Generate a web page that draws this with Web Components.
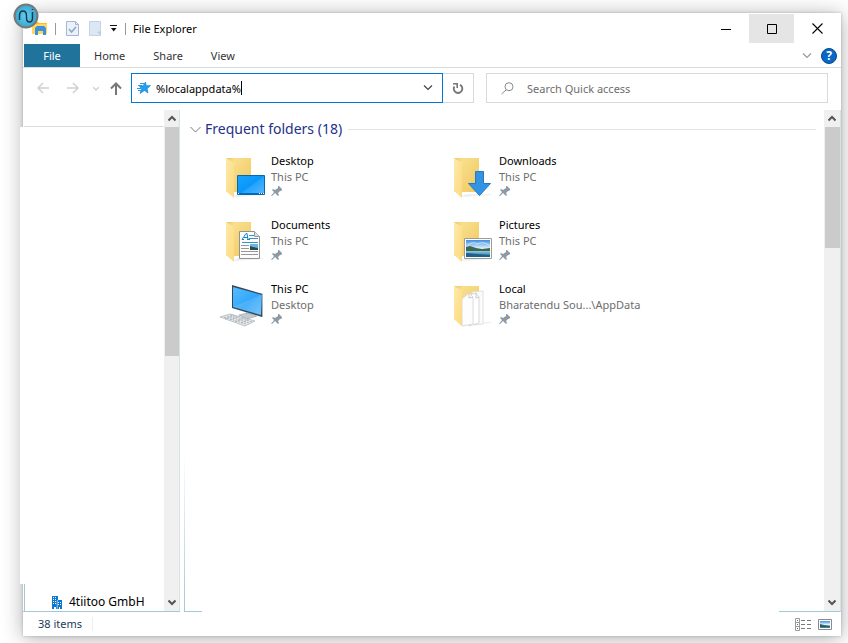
<!DOCTYPE html>
<html lang="en">
<head>
<meta charset="utf-8">
<title>File Explorer</title>
<style>
html,body{margin:0;height:100%;background:#fff}
body{box-sizing:border-box;padding:13px 7px 7px 23px;font:11px/16px "Noto Sans","Open Sans",sans-serif;color:#000;overflow:hidden}
</style>
</head>
<body>
<explorer-window></explorer-window>
<script>
const define = (name, html, setup) => {
  const t = document.createElement('template');
  t.innerHTML = `<style>*{box-sizing:border-box}button{font:inherit;color:inherit;background:none;border:0;padding:0;margin:0;display:flex;align-items:center;justify-content:center}svg{display:block;flex:none}</style>` + html;
  customElements.define(name, class extends HTMLElement {
    constructor() {
      super();
      this.attachShadow({mode: 'open'}).append(t.content.cloneNode(true));
    }
    connectedCallback() { if (setup) setup(this, this.shadowRoot); }
  });
};

const folder = `<defs><linearGradient id="f" x1="0" y1="0" x2="1" y2="1"><stop offset="0" stop-color="#e9c869"/><stop offset=".2" stop-color="#f9de8c"/><stop offset="1" stop-color="#efc85f"/></linearGradient><linearGradient id="g" x1="0" x2="1" y2="1"><stop offset="0" stop-color="#ffeaa9"/><stop offset="1" stop-color="#fbd97f"/></linearGradient><linearGradient id="b" x2="1" y2="1"><stop offset="0" stop-color="#1aa3fb"/><stop offset=".5" stop-color="#0897fb"/><stop offset="1" stop-color="#45b2ff"/></linearGradient></defs>
<path d="M12 41l6-3h24l2 1-26 2z" fill="#000" opacity=".06"/><path d="M6 2h25v34H6z" fill="url(#f)"/><path d="M6 2l8 5v35l-8-7z" fill="url(#g)"/>`;
const plain = `<svg width="50" height="46" viewBox="0 0 50 46">`;
const photo = `<defs><linearGradient id="s" x2="0" y2="1"><stop offset="0" stop-color="#3f8fe0"/><stop offset=".5" stop-color="#e4f2fb"/><stop offset=".7" stop-color="#83bad2"/><stop offset="1" stop-color="#246c9c"/></linearGradient></defs>`;
const art = {
  desktop: `${plain}${folder}<path d="M17.500 19.500h27v19h-27z" fill="url(#b)" stroke="#0868ad"/><path d="M21 37L44 20v17z" fill="#fff" opacity=".1"/><path d="M18 37.500h26" stroke="#066ab5"/><path d="M18 37.500h1m20 0h1m1 0h1m1 0h1" stroke="#fff"/></svg>`,
  documents: `${plain}${folder}<path d="M19.500 11.500h15l5 5v22h-20z" fill="#fcfcfc" stroke="#929292"/><path d="M34.500 11.500v5h5" fill="#ddd" stroke="#999"/><path d="M22 19.500l4-6h1l1 6m-4-2h4m-6 2h2m3 0h3" fill="none" stroke="#1684c6"/><path d="M29 15.500h5m-5 3h9M22 22.500h16" stroke="#3093ce"/><path d="M21 25.500h8m-8 3h8m-8 3h17m-17 3h17" stroke="#989898"/><path d="M30 24h8v6h-8z" fill="#6cb3e5"/><path d="M30 26l3 1 5 1v2h-8z" fill="#294c4b"/></svg>`,
  pc: `${plain}<defs><linearGradient id="p" x2="1" y2="1"><stop stop-color="#55bcff"/><stop offset=".55" stop-color="#32a6fa"/><stop offset="1" stop-color="#63bdfa"/></linearGradient></defs><path d="M12 1l31 9-1 23-30-9z" fill="#35485a"/><path d="M13 3l29 8-1 20-28-8z" fill="url(#p)"/><path d="M13 23l28-12v20z" fill="#fff" opacity=".12"/><path d="M42 10h1v23h-1z" fill="#aab6bd"/><path d="M26 28l6 2-1 3h-4z" fill="#8998a3"/><path d="M19 31l9-2 9 3-10 3z" fill="#c3cbd0" stroke="#8f9ca5" stroke-width=".6"/><path d="M0 33l10-3 25 7-10 5z" fill="#e6e9eb" stroke="#a5afb5" stroke-width=".7"/><path d="M4 33l22 7M7 32l22 7M10 31l22 7M5 35l9-4m-4 5l9-4m-4 6l9-4m-3 5l8-4" stroke="#a0a9af" stroke-dasharray="2 1" stroke-width=".8"/></svg>`,
  downloads: `${plain}${folder}<path d="M27.500 15.500h8v12h7L31.500 39.500l-11-12h7z" fill="#3394e5" stroke="#237ac2"/></svg>`,
  pictures: `${plain}${folder}${photo}<path d="M16.500 18.500h27v20h-27z" fill="#fff" stroke="#9b9b9b"/><path d="M18 20h24v17H18z" fill="url(#s)"/><path d="M18 27l4-1 6 2 6 1 8-1v3H18z" fill="#386951"/><path d="M18 33l24 2v2H18z" fill="#1b638f"/><path d="M20 25q5-4 9-1 6-3 12 1" fill="none" stroke="#fff" opacity=".6"/></svg>`,
  local: `${plain}${folder}<path d="M24 8l11-1v33l-9 1z" fill="#fbfbfb" stroke="#e0e0e0"/><path d="M21 11l7-2 3 4v26l-10 3z" fill="#fff" stroke="#d9d9d9"/><path d="M14 15l7-6 4 4v27l-11 2z" fill="#fdfdfd" stroke="#dcdcdc"/><path d="M21 9v5l4-1M28 9v5l3-1" fill="none" stroke="#cacaca"/><path d="M6 2l8 5v35l-8-7z" fill="url(#g)"/></svg>`,
  pin: `<svg width="12" height="12" viewBox="0 0 12 12"><path d="M7 1h1l3 3v1l-1 1H9L7 8l1 2-1 1-3-3-3 3H0l3-4-2-2 1-1 2 1 3-2z" fill="#8d9aa5"/></svg>`,
  quick: `<svg width="16" height="16" viewBox="0 0 16 16"><path d="M0 1h6l1 1h8v11H0z" fill="#f6bd2f"/><path d="M0 3h15v10H0z" fill="#ffd75e"/><path d="M3 7l2-2h7l2 2v7h-3v-4H6v4H3z" fill="#3d91dc"/></svg>`,
  logo: `<svg width="26" height="26" viewBox="0 0 26 26"><defs><radialGradient id="l"><stop stop-color="#65cef0"/><stop offset="1" stop-color="#36a7d0"/></radialGradient></defs><circle cx="13" cy="13" r="11.500" fill="url(#l)" stroke="#777" stroke-width="2"/><path d="M5.500 17v-4q0-5 3.500-5t3.500 5v2q0 4 3 4t3-4V9m0-3v1" transform="translate(1 0)" fill="none" stroke="#173a4b" stroke-width="1.500"/></svg>`,
  check: `<svg width="13" height="17" viewBox="0 0 13 17"><path d="M.5 1.500h9l3 3v11H.5z" fill="#eaf1f9" stroke="#a5b8d0"/><path d="M9.500 1.500v3h3" fill="none" stroke="#a5b8d0"/><path d="M3 9l2.500 3L10 7" fill="none" stroke="#8daaca" stroke-width="1.600"/></svg>`,
  page: `<svg width="13" height="17" viewBox="0 0 13 17"><path d="M.5 1.500h11v14H.5z" fill="#dce7f5" stroke="#c4d2e5"/><path d="M8 12l4-1v4l-2-1z" fill="#bacde3"/></svg>`,
  more: `<svg width="8" height="8" viewBox="0 0 8 8"><path d="M0 .5h7" stroke="#111"/><path d="M1 3h5.500L3.700 6.500z" fill="#111"/></svg>`,
  down: `<svg width="10" height="6" viewBox="0 0 10 6"><path d="M1 .5l4 4 4-4" fill="none" stroke="currentColor" stroke-width="1.200"/></svg>`,
  small: `<svg width="6" height="5" viewBox="0 0 6 5"><path d="M0 1l3 3 3-3" fill="none" stroke="currentColor" stroke-width="1.300"/></svg>`,
  section: `<svg width="11" height="7" viewBox="0 0 11 7"><path d="M.5 1l5 5 5-5" fill="none" stroke="#777"/></svg>`,
  back: `<svg width="13" height="12" viewBox="0 0 13 12"><path d="M6 1L1 6l5 5M1 6h11" fill="none" stroke="currentColor" stroke-width="1.500"/></svg>`,
  fwd: `<svg width="13" height="12" viewBox="0 0 13 12"><path d="M7 1l5 5-5 5M12 6H1" fill="none" stroke="currentColor" stroke-width="1.500"/></svg>`,
  up: `<svg width="12" height="13" viewBox="0 0 12 13"><path d="M1 6.500l5-5 5 5M6 2v11" fill="none" stroke="currentColor" stroke-width="2"/></svg>`,
  star: `<svg width="14" height="14" viewBox="0 0 14 14"><path d="M8.500 1l.8 3.800 4.200-.3-3.300 3.300L11 12 7.500 9.500 3 12.500l1.500-4.700-2-2.800 3.500-.2z" fill="#1fa1f3" stroke="#147cc4" stroke-width=".6"/><path d="M3 2.500h4M1 4.500h4M0 7.500h4M1 9.500h3" stroke="#2b9ae0"/></svg>`,
  refresh: `<svg width="12" height="13" viewBox="0 0 12 13"><path d="M8 2.800A4.300 4.300 0 1 1 2.300 4.500" fill="none" stroke="#777" stroke-width="1.900"/><path d="M1 1.800h4.200v4.200" fill="none" stroke="#777" stroke-width="1.600"/></svg>`,
  search: `<svg width="13" height="13" viewBox="0 0 13 13"><circle cx="8" cy="4.700" r="4" fill="none" stroke="#888"/><path d="M5 8l-4.500 4" stroke="#888"/></svg>`,
  min: `<svg width="10" height="10"><path d="M0 5.500h10" stroke="#000"/></svg>`,
  max: `<svg width="10" height="10"><path d="M.5.500h9v9h-9z" fill="none" stroke="#000"/></svg>`,
  close: `<svg width="11" height="11"><path d="M.5.500l10 10m0-10l-10 10" stroke="#000" stroke-width="1.100"/></svg>`,
  sup: `<svg width="8" height="7" viewBox="0 0 8 7"><path d="M.5 5.500L4 2l3.500 3.500" fill="none" stroke="#555" stroke-width="2"/></svg>`,
  sdown: `<svg width="8" height="7" viewBox="0 0 8 7"><path d="M.5 1.500L4 5l3.500-3.500" fill="none" stroke="#555" stroke-width="2"/></svg>`,
  building: `<svg width="10" height="13" viewBox="0 0 10 13"><path d="M0 0h6v4h4v9H8v-2H7v2H4v-2H2v2H0z" fill="#0b78d0"/><path d="M1 1.500h1m1 0h1m-3 2h1m1 0h1m-3 2h1m1 0h1m-3 2h1m1 0h1M6 6.500h1m1 0h1m-3 2h1m1 0h1" stroke="#fff"/><path d="M5 4.500h1M5.200 5v8" stroke="#fff" stroke-width=".6"/></svg>`,
  details: `<svg width="16" height="13" viewBox="0 0 16 13"><path d="M.5.500h4v12h-4zM0 4.500h5M0 8.500h5" fill="#fff" stroke="#999"/><path d="M2 2.500h1" stroke="#393"/><path d="M2 6.500h1" stroke="#36c"/><path d="M2 10.500h1" stroke="#c33"/><path d="M6 2.500h4m2 0h4M6 6.500h4m2 0h4M6 10.500h4m2 0h4" stroke="#777"/></svg>`,
  large: `<svg width="14" height="11" viewBox="0 0 14 11">${photo}<path d="M.5.500h13v10H.5z" fill="#fff" stroke="#8a8a8a"/><path d="M2 2h10v7H2z" fill="url(#s)"/><path d="M2 5l4 1 6 1v1H2z" fill="#315e61"/></svg>`
};

define('ui-icon', `<style>:host{display:block;flex:none}</style><span></span>`, (el, root) => {
  root.querySelector('span').innerHTML = art[el.getAttribute('name')];
});

define('app-logo', `<style>:host{display:block;position:absolute;left:-10px;top:-10px;z-index:2}</style><ui-icon name="logo"></ui-icon>`);

define('title-bar', `<style>
:host{display:flex;height:31px;align-items:center;padding-left:9px}
.group{display:flex;align-items:center}
i{width:1px;height:12px;background:#999}
.quick{gap:10px;flex:1}
.tools{gap:12px}
.tools ui-icon{margin-right:-5px}
.caption{gap:7px;margin-left:-2px}
h1{font:inherit;margin:0}
.win{align-self:stretch;padding:1px 1px 0 0;align-items:flex-start}
.win button{width:46px;height:29px}
.win .max{background:#e5e5e5;width:45px}
</style>
<div class="group quick"><div class="group tools"><ui-icon name="quick"></ui-icon><i></i></div>
<button aria-label="Properties"><ui-icon name="check"></ui-icon></button>
<button aria-label="New folder"><ui-icon name="page"></ui-icon></button>
<div class="group caption"><button aria-label="Customize toolbar"><ui-icon name="more"></ui-icon></button><i></i><h1>File Explorer</h1></div></div>
<div class="group win"><button aria-label="Minimize"><ui-icon name="min"></ui-icon></button><button class="max" aria-label="Maximize"><ui-icon name="max"></ui-icon></button><button aria-label="Close"><ui-icon name="close"></ui-icon></button></div>`);

define('ribbon-tabs', `<style>
:host{display:flex;height:24px;border-bottom:1px solid #dadbdc;padding-left:1px;color:#333}
button{padding:0 14px}
.file{background:#20739b;color:#fff;width:56px;padding:0}
.end{margin-left:auto;display:flex;align-items:center;gap:9px;padding-right:4px;color:#999}
.end button{padding:0}
.help{width:16px;height:16px;border-radius:50%;background:#0868c9;border:1px solid #0b4a83;color:#fff;font-weight:700;font-size:12px}
</style><button class="file">File</button><button>Home</button><button>Share</button><button>View</button>
<div class="end"><button aria-label="Expand ribbon"><ui-icon name="down"></ui-icon></button><button class="help">?</button></div>`);

define('address-row', `<style>
:host{display:flex;height:42px;padding:5px 13px 7px 14px;align-items:stretch}
.nav{display:flex;align-items:center;color:#d0d0d0;width:94px;gap:16px;flex:none}
.nav .hist{margin:0 -5px 0 -2px}
.nav .up{color:#777}
.path{display:flex;align-items:center;border:1px solid #0078d7;padding:0 9px 0 5px;flex:0 1 312px;color:#000}
input{font:inherit;color:inherit;border:0;outline:0;padding:0;margin:0;background:none;height:20px}
.path input{field-sizing:content;margin-left:5px}
.caret{width:1px;height:14px;background:#000}
.path button{margin-left:auto;color:#444}
.refresh{border:1px solid #d9d9d9;border-left:0;width:31px}
.search{display:flex;align-items:center;gap:13px;flex:1;margin-left:12px;border:1px solid #d9d9d9;padding-left:14px;color:#6d6d6d}
.search input{flex:1;min-width:0}
input::placeholder{color:#6d6d6d;opacity:1}
</style>
<div class="nav"><button aria-label="Back"><ui-icon name="back"></ui-icon></button><button aria-label="Forward"><ui-icon name="fwd"></ui-icon></button><button class="hist" aria-label="Recent locations"><ui-icon name="small"></ui-icon></button><button class="up" aria-label="Up"><ui-icon name="up"></ui-icon></button></div>
<div class="path"><ui-icon name="star"></ui-icon><input aria-label="Address" value="%localappdata%"><span class="caret"></span><button aria-label="Previous locations"><ui-icon name="down"></ui-icon></button></div>
<button class="refresh" aria-label="Refresh"><ui-icon name="refresh"></ui-icon></button>
<label class="search"><ui-icon name="search"></ui-icon><input aria-label="Search" placeholder="Search Quick access"></label>`);

define('scroll-bar', `<style>
:host{display:flex;flex-direction:column;width:16px;background:#f0f0f0;flex:none}
button{height:17px;flex:none;width:100%}
.track{flex:1}
.thumb{background:#cbcbcb;margin:0 0 0 1px;height:var(--thumb)}
</style><button aria-label="Scroll up"><ui-icon name="sup"></ui-icon></button><div class="track"><div class="thumb"></div></div><button aria-label="Scroll down"><ui-icon name="sdown"></ui-icon></button>`);

define('nav-pane', `<style>
:host{display:flex;width:157px;flex:none;border-bottom:1px solid #a3c8d3;--thumb:49%}
.list{flex:1;display:flex;flex-direction:column}
.top{height:17px;border-bottom:1px solid #dcdcdc;margin-left:1px}
.blank{flex:1;background:#fff;margin-left:-3px}
.item{height:27px;display:flex;align-items:center;gap:7px;margin-left:1px;border-left:1px solid #a3c8d3;padding:9px 0 0 27px;font-size:12px;white-space:nowrap}
scroll-bar{border-right:1px solid #d5e2e6}
</style><div class="list"><div class="top"></div><div class="blank"></div><div class="item"><ui-icon name="building"></ui-icon><slot></slot></div></div><scroll-bar></scroll-bar>`);

define('folder-tile', `<style>
:host{display:flex;height:64px;color:#6d6d6d;gap:1px}
p{margin:0;white-space:nowrap}
.name{color:#000}
.art{padding-top:3px}
</style><div class="art"></div><div class="text"><p class="name"><slot></slot></p><p><slot name="place"></slot></p><ui-icon name="pin"></ui-icon></div>`, (el, root) => {
  const icon = document.createElement('ui-icon');
  icon.setAttribute('name', el.getAttribute('icon'));
  root.querySelector('.art').replaceChildren(icon);
});

define('folder-view', `<style>
:host{display:flex;flex:1;min-width:0;margin-left:4px}
.main{flex:1;display:flex;flex-direction:column;min-width:0}
header{display:flex;align-items:center;gap:4px;height:20px;margin:9px 8px 14px 6px}
h2{font-weight:400;font-size:14px;line-height:20px;color:#1e3287;margin:0}
hr{flex:1;border:0;border-top:1px solid #e2e2e2;margin:0 0 0 2px}
.grid{display:grid;grid-template-columns:228px 228px;padding-left:36px}
.line{margin-top:auto;height:160px;display:flex;justify-content:space-between;align-items:flex-end}
.line b{border-left:1px solid;border-bottom:1px solid;border-image:linear-gradient(#fff,#a3c8d3) 1;width:18px;height:100%}
.line u{width:45px;height:1px;background:#a3c8d3}
scroll-bar{--thumb:26%;width:17px;border-right:1px solid #d5e2e6;border-bottom:1px solid #a3c8d3}
</style><div class="main"><header><ui-icon name="section"></ui-icon><h2>Frequent folders (18)</h2><hr></header><div class="grid"><slot></slot></div><div class="line"><b></b><u></u></div></div><scroll-bar></scroll-bar>`);

define('status-bar', `<style>
:host{display:flex;height:24px;align-items:center;padding:0 9px 0 15px;color:#1e395b}
.sep{width:1px;height:14px;background:#eee;margin-left:10px}
.views{margin-left:auto;display:flex;gap:7px;align-items:center}
</style><slot></slot><span class="sep"></span><div class="views"><button aria-label="Details"><ui-icon name="details"></ui-icon></button><button aria-label="Large icons"><ui-icon name="large"></ui-icon></button></div>`);

define('explorer-window', `<style>
:host{display:flex;flex-direction:column;position:relative;height:100%;background:#fff;box-shadow:0 2px 20px rgba(0,0,0,.32),0 0 3px rgba(0,0,0,.2)}
main{display:flex;flex:1;min-height:0}
</style>
<app-logo></app-logo><title-bar></title-bar><ribbon-tabs></ribbon-tabs><address-row></address-row>
<main><nav-pane>4tiitoo GmbH</nav-pane><folder-view>
<folder-tile icon="desktop">Desktop<span slot="place">This PC</span></folder-tile>
<folder-tile icon="downloads">Downloads<span slot="place">This PC</span></folder-tile>
<folder-tile icon="documents">Documents<span slot="place">This PC</span></folder-tile>
<folder-tile icon="pictures">Pictures<span slot="place">This PC</span></folder-tile>
<folder-tile icon="pc">This PC<span slot="place">Desktop</span></folder-tile>
<folder-tile icon="local">Local<span slot="place">Bharatendu Sou...\\AppData</span></folder-tile>
</folder-view></main><status-bar>38 items</status-bar>`);
</script>
</body>
</html>
